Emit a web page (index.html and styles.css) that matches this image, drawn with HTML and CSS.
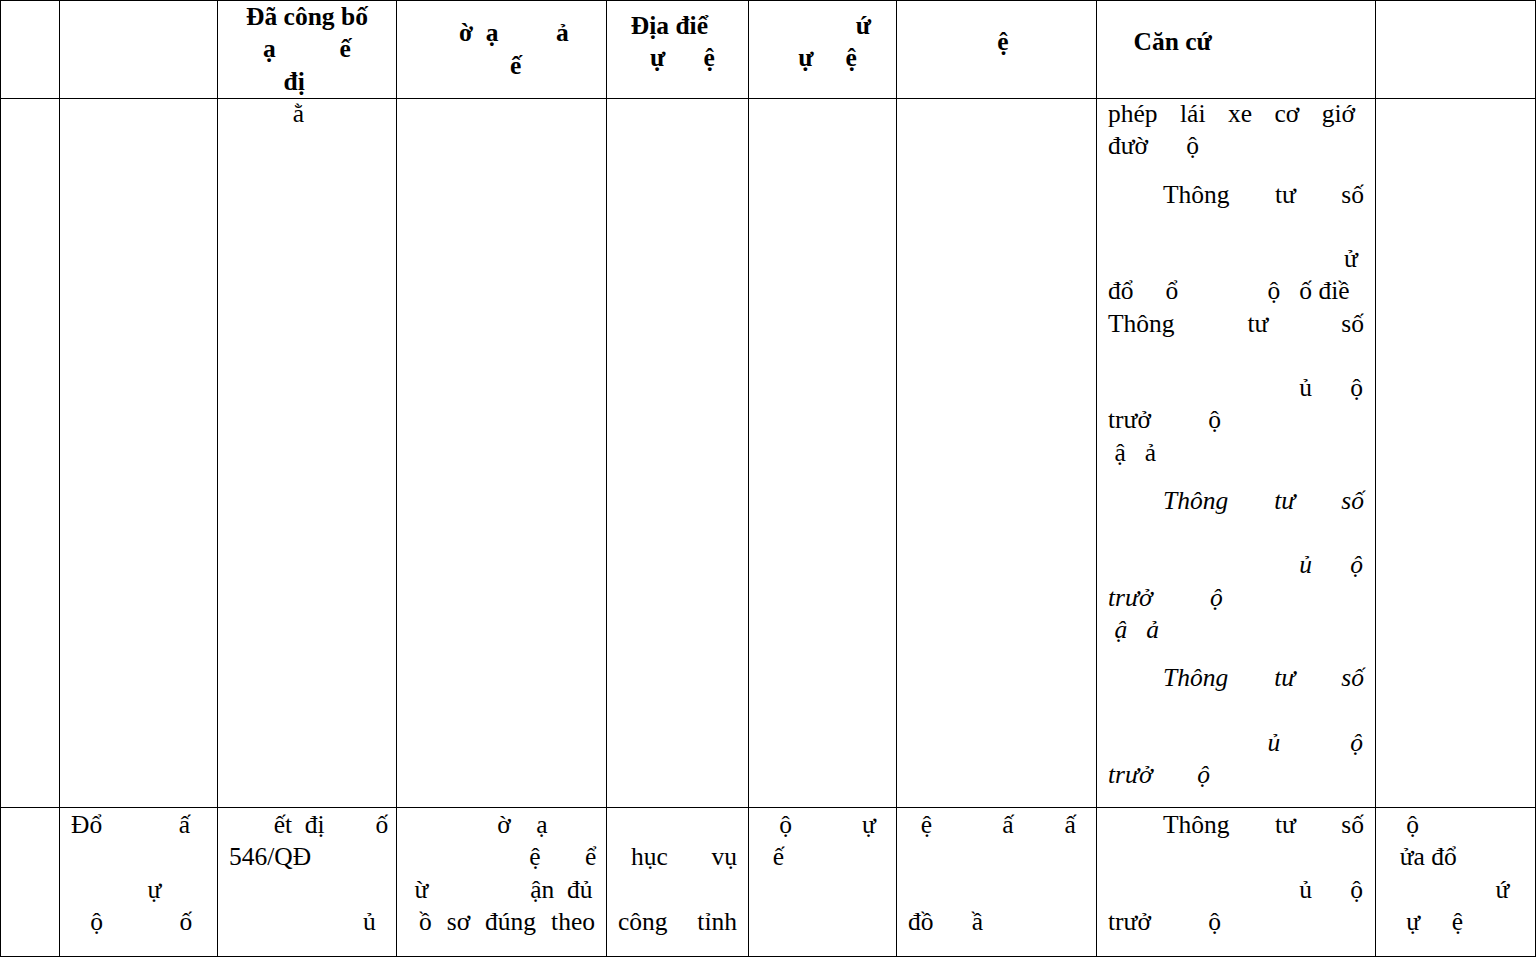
FILE: index.html
```html
<!DOCTYPE html>
<html lang="vi">
<head>
<meta charset="utf-8">
<title>Bảng thủ tục</title>
<link rel="stylesheet" href="styles.css">
</head>
<body>
<div class="table">
  <div class="cell head"></div>
  <div class="cell head"></div>
  <div class="cell head vc ctr">
    <div class="ln">Đã công bố</div>
    <div class="ln">ạ          ế</div>
    <div class="ln">đị    </div>
  </div>
  <div class="cell head vc">
    <div class="ln">        ờ  ạ         ả</div>
    <div class="ln">                ế</div>
  </div>
  <div class="cell head pt9">
    <div class="ln">  Địa điể</div>
    <div class="ln">     ự      ệ</div>
  </div>
  <div class="cell head pt9">
    <div class="ln">               ứ</div>
    <div class="ln">      ự     ệ</div>
  </div>
  <div class="cell head pt25">
    <div class="ln">              ệ</div>
  </div>
  <div class="cell head pt25">
    <div class="ln">    Căn cứ</div>
  </div>
  <div class="cell head"></div>

  <div class="cell"></div>
  <div class="cell"></div>
  <div class="cell">
    <div class="ln up">          ằ</div>
  </div>
  <div class="cell"></div>
  <div class="cell"></div>
  <div class="cell"></div>
  <div class="cell"></div>
  <div class="cell">
    <div class="para up">
      <div class="jl pr9">phép lái xe cơ giớ</div>
      <div class="ln">đườ      ộ</div>
    </div>
    <div class="para">
      <div class="jl ind">Thông tư số</div>
      <div class="ln"></div>
      <div class="ln">                                     ử</div>
      <div class="ln">đổ     ổ              ộ   ố điề</div>
      <div class="jl">Thông tư số</div>
      <div class="ln"></div>
      <div class="ln">                              ủ      ộ</div>
      <div class="ln">trưở         ộ</div>
      <div class="ln"> ậ   ả</div>
    </div>
    <div class="para it">
      <div class="jl ind">Thông tư số</div>
      <div class="ln"></div>
      <div class="ln">                              ủ      ộ</div>
      <div class="ln">trưở         ộ</div>
      <div class="ln"> ậ   ả</div>
    </div>
    <div class="para it">
      <div class="jl ind">Thông tư số</div>
      <div class="ln"></div>
      <div class="ln">                         ủ           ộ</div>
      <div class="ln">trưở       ộ</div>
    </div>
  </div>
  <div class="cell"></div>

  <div class="cell r2"></div>
  <div class="cell r2">
    <div class="ln">Đổ            ấ</div>
    <div class="ln"></div>
    <div class="ln">            ự</div>
    <div class="ln">   ộ            ố</div>
  </div>
  <div class="cell r2">
    <div class="ln">       ết  đị        ố</div>
    <div class="ln">546/QĐ</div>
    <div class="ln"></div>
    <div class="ln">                     ủ</div>
  </div>
  <div class="cell r2">
    <div class="ln">              ờ    ạ</div>
    <div class="ln">                   ệ       ể</div>
    <div class="ln"> ừ                ận  đủ</div>
    <div class="jl pl11">ồ sơ đúng theo</div>
  </div>
  <div class="cell r2">
    <div class="ln"></div>
    <div class="jl pl13">hục vụ</div>
    <div class="ln"></div>
    <div class="jl">công tỉnh</div>
  </div>
  <div class="cell r2">
    <div class="ln">   ộ           ự</div>
    <div class="ln">  ế</div>
  </div>
  <div class="cell r2">
    <div class="ln">  ệ           ấ        ấ</div>
    <div class="ln"></div>
    <div class="ln"></div>
    <div class="ln">đồ      ầ</div>
  </div>
  <div class="cell r2">
    <div class="jl ind">Thông tư số</div>
    <div class="ln"></div>
    <div class="ln">                              ủ      ộ</div>
    <div class="ln">trưở         ộ</div>
  </div>
  <div class="cell r2">
    <div class="ln">   ộ</div>
    <div class="ln">  ửa đổ</div>
    <div class="ln">                 ứ</div>
    <div class="ln">   ự     ệ</div>
  </div>
</div>
</body>
</html>
```

FILE: styles.css
```css
* {
  box-sizing: border-box;
}

html,
body {
  margin: 0;
  padding: 0;
  background: #ffffff;
}

body {
  font-family: "Liberation Serif", "Times New Roman", serif;
  font-size: 25.5px;
  line-height: 32.25px;
  color: #000000;
}

.table {
  display: grid;
  grid-template-columns: 59px 158px 179px 210px 142px 148px 200px 279px 160px;
  grid-template-rows: 98px 709px 149px;
  width: 1536px;
  border-top: 1px solid #000000;
  border-left: 1px solid #000000;
}

.cell {
  border-right: 1px solid #000000;
  border-bottom: 1px solid #000000;
  padding: 0 11px;
}

.r2 {
  padding-top: 1px;
}

.head {
  font-weight: bold;
}

.vc {
  display: flex;
  flex-direction: column;
  justify-content: center;
}

.ctr {
  text-align: center;
}

.pt9 {
  padding-top: 9px;
}

.pt25 {
  padding-top: 25px;
}

.ln {
  white-space: pre;
  min-height: 32.25px;
}

.jl {
  text-align: justify;
  text-align-last: justify;
  min-height: 32.25px;
}

.ind {
  padding-left: 55px;
}

.pl11 {
  padding-left: 11px;
}

.pl13 {
  padding-left: 13px;
}

.pr9 {
  padding-right: 9px;
}

.para + .para {
  margin-top: 16px;
}

.it {
  font-style: italic;
}

.up {
  margin-top: -1px;
}
```
